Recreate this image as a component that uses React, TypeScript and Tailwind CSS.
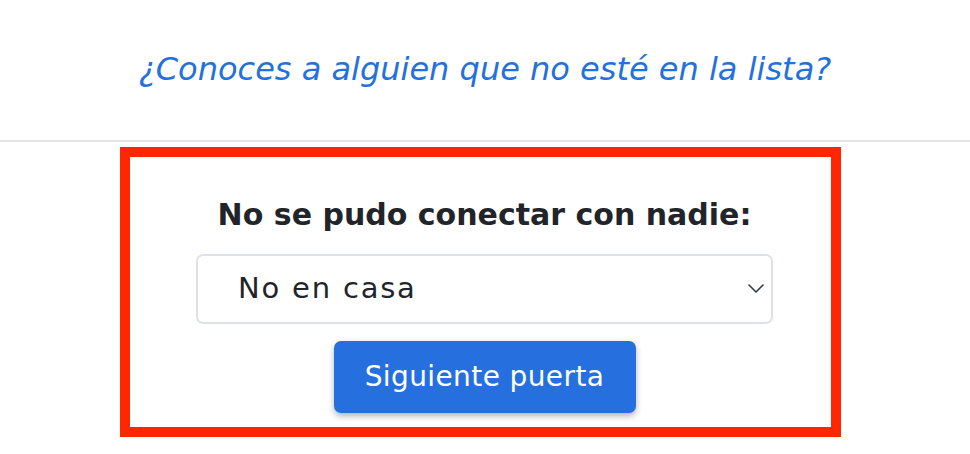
import React from "react";

const font = { fontFamily: '"DejaVu Sans", "Open Sans", sans-serif' };

function Chevron() {
  return (
    <svg
      viewBox="0 0 16 9"
      width="16"
      height="9"
      className="pointer-events-none absolute right-[9px] top-[30px]"
      fill="none"
      stroke="#343a40"
      strokeWidth="1.6"
      strokeLinecap="round"
      strokeLinejoin="round"
    >
      <path d="M1 1l7 7 7-7" />
    </svg>
  );
}

export default function App() {
  return (
    <div className="min-h-[454px] w-[970px] bg-white" style={font}>
      <div className="flex h-[142px] items-center justify-center border-b-2 border-[#e4e4e4] pb-[2px]">
        <a href="#" className="text-[32px] italic text-[#2470dc] no-underline">
          ¿Conoces a alguien que no esté en la lista?
        </a>
      </div>

      <div className="mt-[5px] ml-[120px] h-[290px] w-[721px] border-[10px] border-[#ff2600]">
        <div className="flex flex-col items-center pl-[66px] pr-[58px] pt-[38px]">
          <h2 className="text-[30px] font-bold leading-[40px] text-[#212529]">
            No se pudo conectar con nadie:
          </h2>
          <div className="relative mt-[19px] w-[577px]">
            <select
              className="h-[70px] w-full appearance-none rounded-[7px] border-2 border-[#dee2e6] bg-white pl-[40px] text-[29px] tracking-[1.8px] text-[#212529] outline-none"
              style={font}
              defaultValue="no-en-casa"
            >
              <option value="no-en-casa">No en casa</option>
            </select>
            <Chevron />
          </div>
          <button
            type="button"
            className="mt-[17px] h-[72px] w-[302px] rounded-[7px] bg-[#266fdf] text-[28px] tracking-[0.4px] text-white shadow-[0_3px_6px_rgba(0,0,0,0.3)]"
            style={font}
          >
            Siguiente puerta
          </button>
        </div>
      </div>
    </div>
  );
}
